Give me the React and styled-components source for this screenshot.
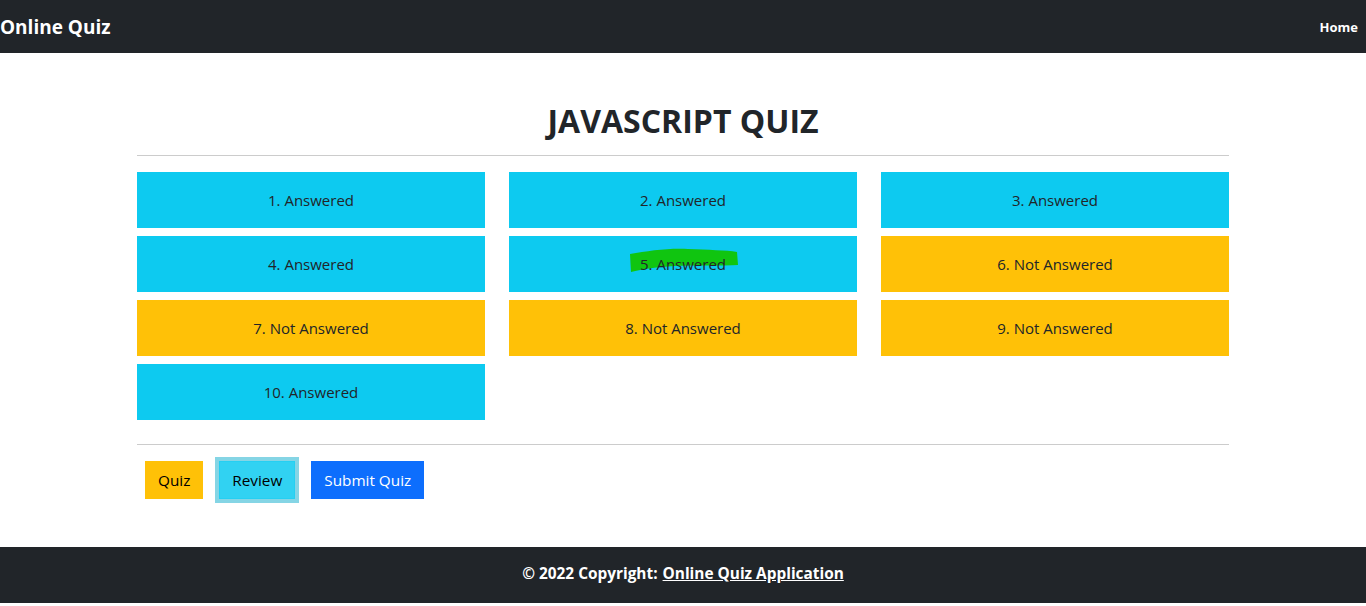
import React from "react";
import styled, { createGlobalStyle } from "styled-components";

const GlobalStyle = createGlobalStyle`
  body {
    margin: 0;
    font-family: "Open Sans", "Noto Sans", sans-serif;
    color: #212529;
    background: #fff;
  }
`;

const Navbar = styled.nav`
  height: 53px;
  background: #212529;
  display: flex;
  align-items: center;
  justify-content: space-between;
  color: #fff;
`;

const Brand = styled.a`
  font-size: 19px;
  font-weight: 700;
  color: #fff;
  text-decoration: none;
`;

const NavLink = styled.a`
  font-size: 13px;
  font-weight: 700;
  color: #fff;
  margin-right: 8px;
  text-decoration: none;
`;

const Main = styled.main`
  width: 1092px;
  margin: 0 auto;
  padding: 48px 0 48px;
`;

const Title = styled.h2`
  margin: 0;
  font-size: 32px;
  line-height: 40px;
  font-weight: 700;
  text-align: center;
`;

const Rule = styled.hr`
  border: 0;
  border-top: 1px solid #cccccc;
  margin: ${(p) => p.$margin};
`;

const Grid = styled.div`
  display: grid;
  grid-template-columns: repeat(3, 1fr);
  column-gap: 24px;
  row-gap: 8px;
`;

const Cell = styled.div`
  position: relative;
  height: 56px;
  display: flex;
  align-items: center;
  justify-content: center;
  font-size: 15px;
  background: ${(p) => (p.$answered ? "#0dcaf0" : "#ffc107")};
`;

const Label = styled.span`
  position: relative;
`;

const Scribble = styled.svg`
  position: absolute;
  left: 121px;
  top: 12px;
  width: 108px;
  height: 24px;
`;

const Actions = styled.div`
  display: flex;
  padding-left: 8px;
  gap: 16px;
`;

const Button = styled.button`
  height: 38px;
  padding: 6px 12px;
  font-family: inherit;
  font-size: 15.3px;
  border: 1px solid ${(p) => p.$border};
  border-radius: 0;
  background: ${(p) => p.$bg};
  color: ${(p) => p.$color};
  box-shadow: ${(p) => (p.$focus ? "0 0 0 4px rgba(11, 172, 204, 0.5)" : "none")};
  cursor: pointer;
`;

const Footer = styled.footer`
  height: 56px;
  background: #212529;
  display: flex;
  align-items: center;
  justify-content: center;
  padding-bottom: 3px;
  box-sizing: border-box;
  color: #fff;
  font-size: 15.4px;
  font-weight: 700;
`;

const FooterLink = styled.a`
  color: #fff;
  margin-left: 5px;
`;

const questions = [true, true, true, true, true, false, false, false, false, true];

export default function App() {
  return (
    <>
      <GlobalStyle />
      <Navbar>
        <Brand href="#">Online Quiz</Brand>
        <NavLink href="#">Home</NavLink>
      </Navbar>
      <Main>
        <Title>JAVASCRIPT QUIZ</Title>
        <Rule $margin="14px 0 16px" />
        <Grid>
          {questions.map((answered, i) => (
            <Cell key={i} $answered={answered}>
              {i === 4 && (
                <Scribble viewBox="0 0 108 24" preserveAspectRatio="none">
                  <path
                    d="M0 6 C18 3 38 0 58 1 C78 2 96 2 107 4 L108 17 C92 18 66 17 44 18 C28 19 12 21 1 24 Z"
                    fill="#10c510"
                  />
                </Scribble>
              )}
              <Label>
                {i + 1}. {answered ? "Answered" : "Not Answered"}
              </Label>
            </Cell>
          ))}
        </Grid>
        <Rule $margin="24px 0 16px" />
        <Actions>
          <Button $bg="#ffc107" $border="#ffc107" $color="#000">
            Quiz
          </Button>
          <Button $bg="#31d2f2" $border="#25cff2" $color="#000" $focus>
            Review
          </Button>
          <Button $bg="#0d6efd" $border="#0d6efd" $color="#fff">
            Submit Quiz
          </Button>
        </Actions>
      </Main>
      <Footer>
        © 2022 Copyright:<FooterLink href="#">Online Quiz Application</FooterLink>
      </Footer>
    </>
  );
}
